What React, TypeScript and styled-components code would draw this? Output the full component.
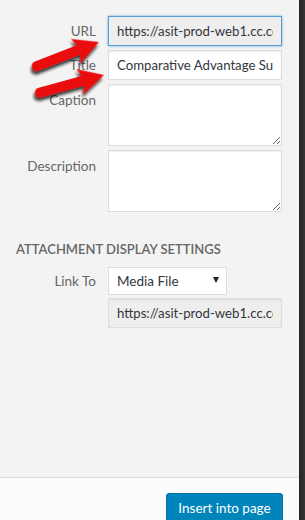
import React from 'react';
import styled, { createGlobalStyle } from 'styled-components';

const GlobalStyle = createGlobalStyle`
  html, body {
    margin: 0;
    padding: 0;
    background: #2f2f2f;
  }
  body {
    font-family: Lato, 'Open Sans', sans-serif;
    -webkit-font-smoothing: antialiased;
  }
`;

const Frame = styled.div`
  position: relative;
  display: flex;
  width: 305px;
  height: 520px;
  overflow: hidden;
`;

const Sidebar = styled.div`
  display: flex;
  flex-direction: column;
  width: 299px;
  flex: none;
`;

const Edge = styled.div`
  flex: 1;
  background: linear-gradient(to right, #262626, #343434);
`;

const Details = styled.div`
  flex: 1;
  background: #f3f3f3;
  padding: 16px 17px 0 0;
`;

const Row = styled.div`
  display: grid;
  grid-template-columns: 96px 174px;
  column-gap: 12px;
  margin-bottom: 4px;
`;

const Label = styled.label<{ $top?: number }>`
  text-align: right;
  font-size: 13.5px;
  line-height: 18px;
  color: #666;
  padding-top: ${(p) => p.$top ?? 6}px;
`;

const TextInput = styled.input<{ $focus?: boolean }>`
  display: block;
  box-sizing: border-box;
  width: 174px;
  height: 30px;
  margin: 0;
  padding: 0 8px;
  font-family: inherit;
  font-size: 13.2px;
  color: #32373c;
  outline: none;
  background: ${(p) => (p.readOnly ? '#eeeeee' : '#ffffff')};
  border: 1px solid ${(p) => (p.$focus ? '#5b9dd9' : '#dddddd')};
  box-shadow: ${(p) =>
    p.$focus ? '0 0 2px rgba(30, 140, 190, 0.8)' : 'inset 0 1px 2px rgba(0, 0, 0, 0.07)'};
`;

const TextArea = styled.textarea`
  display: block;
  box-sizing: border-box;
  width: 174px;
  height: 62px;
  margin: 0;
  padding: 4px 8px;
  border: 1px solid #dddddd;
  box-shadow: inset 0 1px 2px rgba(0, 0, 0, 0.07);
  background: #fff;
  resize: vertical;
  font-family: inherit;
  font-size: 13px;
  outline: none;
`;

const Heading = styled.h2`
  margin: 28px 0 0 16px;
  padding: 0;
  font-size: 13px;
  line-height: 18px;
  font-weight: 600;
  text-transform: uppercase;
  color: #666;
`;

const Settings = styled.div`
  margin-top: 9px;
`;

const Select = styled.div`
  box-sizing: border-box;
  width: 119px;
  height: 28px;
  display: flex;
  align-items: center;
  justify-content: space-between;
  padding: 0 7px 0 8px;
  background: #fff;
  border: 1px solid #dddddd;
  font-size: 13.5px;
  color: #32373c;
`;

const Caret = styled.span`
  width: 0;
  height: 0;
  border-left: 3.5px solid transparent;
  border-right: 3.5px solid transparent;
  border-top: 6px solid #222;
  margin-top: -2px;
`;

const Stack = styled.div`
  display: flex;
  flex-direction: column;
  gap: 3px;
  width: 174px;
`;

const Footer = styled.div`
  box-sizing: border-box;
  height: 43px;
  flex: none;
  border-top: 1px solid #dddddd;
  background: #fcfcfc;
  display: flex;
  justify-content: flex-end;
  align-items: flex-start;
  padding: 15px 16px 0 0;
`;

const PrimaryButton = styled.button`
  box-sizing: border-box;
  width: 117px;
  height: 30px;
  padding: 0;
  border: 1px solid #0073aa;
  border-radius: 3px;
  background: #0085ba;
  color: #fff;
  font-family: inherit;
  font-size: 13.5px;
  line-height: 26px;
  box-shadow: 0 1px 0 #006799;
  cursor: pointer;
`;

const Overlay = styled.svg`
  position: absolute;
  left: 0;
  top: 0;
  pointer-events: none;
`;

type ArrowProps = { x1: number; y1: number; x2: number; y2: number };

const Arrow: React.FC<ArrowProps> = ({ x1, y1, x2, y2 }) => {
  const len = Math.hypot(x2 - x1, y2 - y1);
  const angle = (Math.atan2(y2 - y1, x2 - x1) * 180) / Math.PI;
  const head = 25;
  const w = 5;
  const d = `M 5 ${-w} L ${len - head + 3} ${-w} L ${len - head} -13 L ${len} 0 L ${
    len - head
  } 13 L ${len - head + 3} ${w} L 5 ${w} A ${w} ${w} 0 0 1 5 ${-w} Z`;
  return (
    <g transform={`translate(${x1} ${y1}) rotate(${angle})`}>
      <path d={d} fill="#ea0a0d" filter="url(#arrowShadow)" />
    </g>
  );
};

const fileUrl = 'https://asit-prod-web1.cc.columbia.edu/wp-content/uploads/comparative-advantage.pdf';

const App: React.FC = () => {
  return (
    <>
      <GlobalStyle />
      <Frame>
        <Sidebar>
          <Details>
            <Row>
              <Label>URL</Label>
              <TextInput $focus readOnly value={fileUrl} />
            </Row>
            <Row>
              <Label>Title</Label>
              <TextInput readOnly={false} defaultValue="Comparative Advantage Subrogation" />
            </Row>
            <Row>
              <Label $top={7}>Caption</Label>
              <TextArea />
            </Row>
            <Row>
              <Label $top={7}>Description</Label>
              <TextArea />
            </Row>

            <Heading>Attachment Display Settings</Heading>

            <Settings>
              <Row>
                <Label $top={5}>Link To</Label>
                <Stack>
                  <Select>
                    Media File
                    <Caret />
                  </Select>
                  <TextInput readOnly value={fileUrl} />
                </Stack>
              </Row>
            </Settings>
          </Details>
          <Footer>
            <PrimaryButton>Insert into page</PrimaryButton>
          </Footer>
        </Sidebar>
        <Edge />
        <Overlay width="305" height="120" viewBox="0 0 305 120">
          <defs>
            <filter id="arrowShadow" x="-20%" y="-50%" width="140%" height="220%">
              <feDropShadow dx="-2" dy="3" stdDeviation="1.4" floodColor="#000" floodOpacity="0.75" />
            </filter>
          </defs>
          <Arrow x1={32} y1={68} x2={99} y2={42} />
          <Arrow x1={35} y1={94} x2={104} y2={75} />
        </Overlay>
      </Frame>
    </>
  );
};

export default App;
